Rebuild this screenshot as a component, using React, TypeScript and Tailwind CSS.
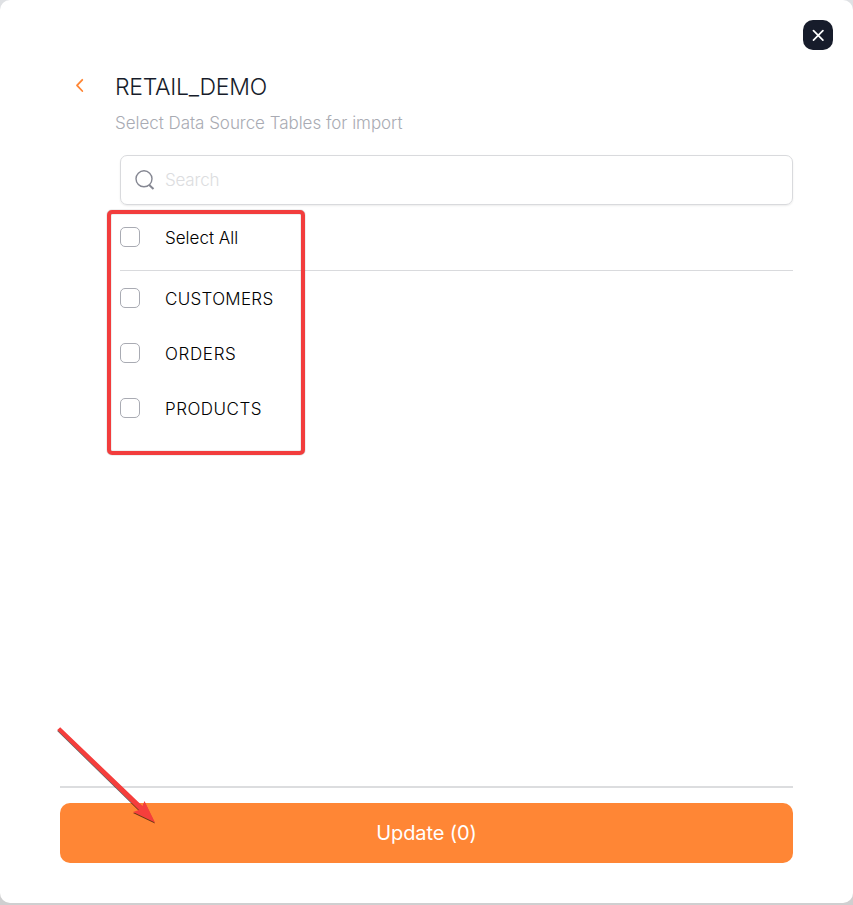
import React from "react";

const tables = [
  { name: "CUSTOMERS", tracking: "tracking-[0.3px]" },
  { name: "ORDERS", tracking: "tracking-[0.65px]" },
  { name: "PRODUCTS", tracking: "tracking-[0.5px]" },
];

function Checkbox({ label }: { label: string }) {
  return (
    <input
      type="checkbox"
      aria-label={label}
      className="size-5 shrink-0 appearance-none rounded-[5px] border border-[#a9abb3] bg-white"
    />
  );
}

export default function App() {
  return (
    <div className="relative h-[905px] w-[853px] overflow-hidden bg-gradient-to-b from-[#dfe1e4] to-[#cfcfd0] font-['Inter','Liberation_Sans',sans-serif] font-light">
      <main className="flex h-[903px] flex-col rounded-[10px] bg-white pt-5">
        <div className="flex h-[30px] justify-end pr-5">
          <button aria-label="Close" className="flex size-[30px] items-center justify-center rounded-[10px] bg-[#171c2b]">
            <svg width="12" height="12" viewBox="0 0 12 12" fill="none" stroke="white" strokeWidth="1.7" strokeLinecap="round">
              <path d="M1.5 1.7 10.9 11.1M10.9 1.7 1.5 11.1" />
            </svg>
          </button>
        </div>

        <header className="flex h-[105px] pl-[75px] pt-[20px]">
          <button aria-label="Back" className="mt-2 h-4 w-10">
            <svg width="10" height="16" viewBox="0 0 10 16" fill="none" stroke="#ff8635" strokeWidth="1.8" strokeLinecap="round" strokeLinejoin="round">
              <path d="M7.3 1.8 2 7.4l5.3 5.6" />
            </svg>
          </button>
          <div className="whitespace-nowrap">
            <h1 className="h-[34px] text-[23px] leading-[34px] tracking-[-0.28px] text-[#171c2b]">RETAIL_DEMO</h1>
            <p className="h-[38px] text-[17px] leading-[38px] tracking-[-0.04px] text-[#a9abb3]">Select Data Source Tables for import</p>
          </div>
        </header>

        <section className="flex flex-1 flex-col pl-[120px] pr-[60px] text-[17px] text-black">
          <label className="flex h-[50px] shrink-0 items-center rounded-[7px] border border-[#d9dadd] pl-[14px] shadow-[0_1px_2px_rgba(0,0,0,0.08)]">
            <svg width="20" height="20" viewBox="0 0 20 20" fill="none" stroke="#858792">
              <circle cx="9" cy="8.8" r="8" strokeWidth="1.4" />
              <path d="m14.2 15 4.3 4" strokeWidth="2" />
            </svg>
            <input
              placeholder="Search"
              className="ml-[10px] w-60 bg-transparent pt-[2px] tracking-[-0.2px] outline-none placeholder:text-[#dcdde0]"
            />
          </label>
          <div className="flex h-[66px] shrink-0 items-center gap-[25px] border-b border-[#d9dadd] pb-px">
            <Checkbox label="Select All" />
            <span className="whitespace-nowrap pt-[4px]">Select All</span>
          </div>
          <ul>
            {tables.map((table) => (
              <li key={table.name} className="flex h-[55px] items-center gap-[25px] pb-px">
                <Checkbox label={table.name} />
                <span className={`pt-[4px] ${table.tracking}`}>{table.name}</span>
              </li>
            ))}
          </ul>
        </section>

        <footer className="mx-[60px] mb-10 border-t-2 border-[#dcdddf] pt-[15px]">
          <button className="h-[60px] w-full rounded-[10px] bg-[#ff8635] text-[20px] font-normal leading-[60px] tracking-[-0.1px] text-white">Update (0)</button>
        </footer>
      </main>

      <div className="pointer-events-none absolute left-[107px] top-[210px] h-[245px] w-[198px] rounded-[5px] border-4 border-[#f23d3d] shadow-[0_0_1px_rgba(0,0,0,0.65),inset_0_0_1px_rgba(0,0,0,0.65)]" />
      <svg className="pointer-events-none absolute left-[50px] top-[720px] drop-shadow-[0_1px_0.5px_rgba(0,0,0,0.6)]" width="115" height="110" viewBox="0 0 115 110" fill="#f53e3c">
        <path d="M10.2 7.2 92.5 86 94.5 81 105 102.5 83 92 89 90 7.2 10Z" />
      </svg>
    </div>
  );
}
